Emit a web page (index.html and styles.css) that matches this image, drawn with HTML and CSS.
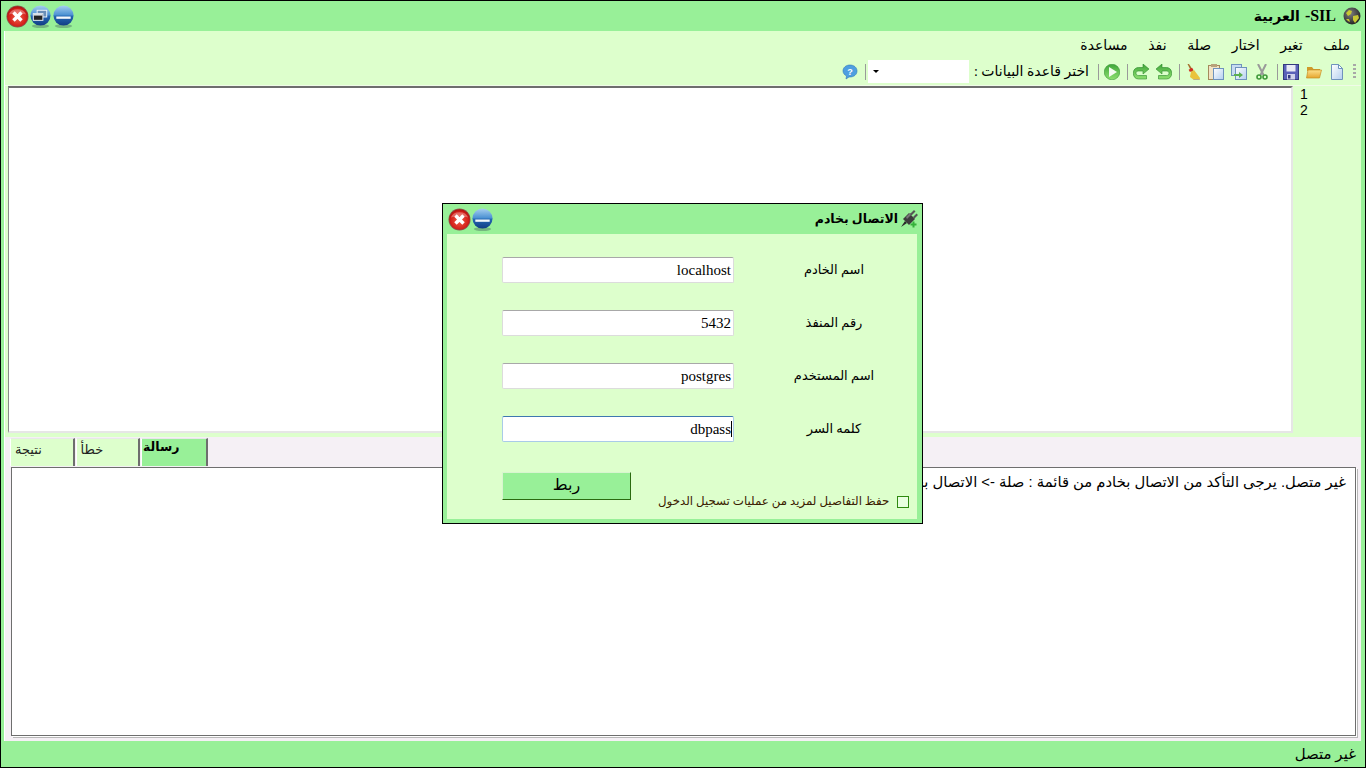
FILE: index.html
```html
<!DOCTYPE html>
<html lang="ar">
<head>
<meta charset="utf-8">
<title>SIL</title>
<link rel="stylesheet" href="styles.css">
</head>
<body>
<svg class="defs" width="0" height="0" aria-hidden="true">
  <defs>
    <radialGradient id="gRed" cx="50%" cy="55%" r="60%"><stop offset="0" stop-color="#f0604a"/><stop offset=".7" stop-color="#d4201a"/><stop offset="1" stop-color="#950b08"/></radialGradient>
    <linearGradient id="gBlue" x1="0" y1="0" x2="0" y2="1"><stop offset="0" stop-color="#a8d0f0"/><stop offset=".48" stop-color="#4a90d2"/><stop offset=".52" stop-color="#2468b4"/><stop offset="1" stop-color="#123c84"/></linearGradient>
    <linearGradient id="gGreen" x1="0" y1="0" x2="0" y2="1"><stop offset="0" stop-color="#3fa63a"/><stop offset="1" stop-color="#8fe070"/></linearGradient>
    <linearGradient id="gDoc" x1="0" y1="0" x2="1" y2="1"><stop offset="0" stop-color="#ffffff"/><stop offset="1" stop-color="#b4cff0"/></linearGradient>
    <linearGradient id="gFolder" x1="0" y1="0" x2="0" y2="1"><stop offset="0" stop-color="#fde08a"/><stop offset="1" stop-color="#e5a52e"/></linearGradient>
    <radialGradient id="gGlobe" cx="40%" cy="35%" r="70%"><stop offset="0" stop-color="#808080"/><stop offset="1" stop-color="#1e1e1e"/></radialGradient>
    <symbol id="i-close" viewBox="0 0 24 24"><circle cx="12" cy="12" r="11.5" fill="#8a5a50"/><circle cx="12" cy="12" r="10.8" fill="url(#gRed)"/><path d="M3 10a9.500 8 0 0 1 18 0a18 10 0 0 0-18 0z" fill="#fff" opacity=".3"/><path d="M7.800 7.800l8.400 8.400M16.200 7.800l-8.400 8.400" stroke="#fff" stroke-width="3.600"/></symbol>
    <symbol id="i-min" viewBox="0 0 24 24"><ellipse cx="12" cy="22" rx="9" ry="2" fill="#5f8f70" opacity=".6"/><circle cx="12" cy="11" r="10.500" fill="url(#gBlue)"/><rect x="4.500" y="12" width="15" height="2.400" fill="#f4f8fc"/></symbol>
    <symbol id="i-restore" viewBox="0 0 24 24"><ellipse cx="12" cy="22" rx="9" ry="2" fill="#5f8f70" opacity=".6"/><circle cx="12" cy="11" r="10.500" fill="url(#gBlue)"/><rect x="8.500" y="5.500" width="10" height="7" fill="#6a8fb8" stroke="#eef4fa"/><rect x="4.500" y="9" width="10" height="7" fill="#222" stroke="#eef4fa"/><rect x="5" y="9.500" width="9" height="1.500" fill="#eef4fa"/></symbol>
    <symbol id="i-globe" viewBox="0 0 18 18"><circle cx="9" cy="9" r="8.500" fill="url(#gGlobe)"/><path d="M3 6l3-3 3 1-1 3-3 2zM10 9l5-1 1 3-4 5-2-3zM3 12l3 0 1 3-2-1z" fill="#c8c832"/></symbol>
    <symbol id="i-plug" viewBox="0 0 18 18"><path d="M1 17l4-6 2 2z" fill="#2a2a2a"/><path d="M3 9l6-6 6 6-6 6z" fill="#3c3c3c"/><path d="M6 7l4-4 2 1-5 5z" fill="#777"/><path d="M10 4l4-4 1.500 1.500-4 4zM13 7l3.500-3.500 1.500 1.500-4 4z" fill="#555"/><path d="M12.500 11.500h2v2h2v2h-2v2h-2v-2h-2v-2h2z" fill="#35b03a"/></symbol>
    <symbol id="i-new" viewBox="0 0 16 16"><path d="M2.500 .5h7l4 4v11h-11z" fill="url(#gDoc)" stroke="#6f93bd"/><path d="M9.500 .5v4h4z" fill="#fff" stroke="#6f93bd"/></symbol>
    <symbol id="i-open" viewBox="0 0 16 16"><path d="M1 3h5l1.500 2H14v2H1z" fill="#d09a2a"/><path d="M.5 14l1.500-8h13.500l-2 8z" fill="url(#gFolder)" stroke="#c78f22" stroke-width=".7"/></symbol>
    <symbol id="i-save" viewBox="0 0 16 16"><rect x=".5" y=".5" width="15" height="15" fill="#5a62b8" stroke="#33397f"/><rect x="3.500" y="1" width="9" height="6.500" fill="#e8eaf6"/><rect x="4" y="10" width="8" height="5.500" fill="#cfd3ea"/><rect x="5" y="11" width="2.500" height="3.500" fill="#33397f"/></symbol>
    <symbol id="i-cut" viewBox="0 0 16 16"><path d="M4 0l5.500 11M12 0L6.500 11" stroke="#9a9a9a" stroke-width="2" fill="none"/><circle cx="5" cy="13" r="2" fill="none" stroke="#3f9a3a" stroke-width="1.600"/><circle cx="11" cy="13" r="2" fill="none" stroke="#3f9a3a" stroke-width="1.600"/></symbol>
    <symbol id="i-copy" viewBox="0 0 16 16"><rect x=".5" y=".5" width="10" height="11" fill="#c8dcf2" stroke="#6f93bd"/><rect x="4.500" y="3.500" width="11" height="12" fill="url(#gDoc)" stroke="#6f93bd"/><path d="M3 10h5V8l4 3-4 3v-2H3z" fill="#5bb04f"/></symbol>
    <symbol id="i-paste" viewBox="0 0 16 16"><rect x=".5" y="1.500" width="11" height="14" fill="#f1e3c5" stroke="#a58a5c"/><rect x="3" y="0" width="6" height="3" fill="#b7a27a"/><rect x="5.500" y="4.500" width="10" height="11" fill="url(#gDoc)" stroke="#6f93bd"/></symbol>
    <symbol id="i-broom" viewBox="0 0 16 16"><path d="M2.500 0l1.500 0 4.500 7-2 1z" fill="#a5702c"/><rect x="4" y="4.500" width="4" height="2.600" fill="#d32a20" transform="rotate(-30 6 5.800)"/><path d="M6 8l3-2 6 8-.5 2H9l-4-3z" fill="#e9c33d"/><path d="M9 15l5 0 1 1H8z" fill="#b9b08a"/></symbol>
    <symbol id="i-undo" viewBox="0 0 16 16"><path d="M6 0L0 5l6 5V7h4.500c1.500 0 2.500.8 2.500 2.200s-1 2.300-2.500 2.300H2.500V15h8c3 0 5.200-2.300 5.200-5.800s-2.200-5.700-5.200-5.700H6z" fill="url(#gGreen)" stroke="#2c8a2c" stroke-width=".6"/></symbol>
    <symbol id="i-redo" viewBox="0 0 16 16"><path d="M10 0l6 5-6 5V7H5.500C4 7 3 7.800 3 9.200s1 2.300 2.500 2.300h8V15h-8C2.500 15 .3 12.700.3 9.200S2.500 3.500 5.500 3.500H10z" fill="url(#gGreen)" stroke="#2c8a2c" stroke-width=".6"/></symbol>
    <symbol id="i-run" viewBox="0 0 16 16"><circle cx="8" cy="8" r="7.800" fill="url(#gGreen)" stroke="#2a8a2a" stroke-width=".5"/><path d="M5 3l8 5-8 5z" fill="#f4fbf0"/></symbol>
    <symbol id="i-help" viewBox="0 0 16 16"><path d="M8 1c4 0 7 2.500 7 6s-3 6-7 6l-1 0-3 2 .5-3C2.500 11 1 9 1 7c0-3.500 3-6 7-6z" fill="#4f9fe0" stroke="#2f78ba" stroke-width=".6"/><text x="8" y="10.500" font-size="9" font-weight="700" text-anchor="middle" fill="#fff" font-family="Liberation Sans, sans-serif">?</text></symbol>
  </defs>
</svg>

<div class="app">
  <header class="titlebar">
    <div class="win-btns">
      <svg class="winbtn"><use href="#i-close"/></svg>
      <svg class="winbtn"><use href="#i-restore"/></svg>
      <svg class="winbtn"><use href="#i-min"/></svg>
    </div>
    <div class="apptitle">
      <span>العربية</span><span class="brand">-SIL</span>
      <svg class="globe"><use href="#i-globe"/></svg>
    </div>
  </header>

  <main class="main">
    <nav class="menu" dir="rtl">
      <span>ملف</span><span>تغير</span><span>اختار</span><span>صلة</span><span>نفذ</span><span>مساعدة</span>
    </nav>

    <div class="toolbar" dir="rtl">
      <span class="grip"></span>
      <svg class="tool"><use href="#i-new"/></svg>
      <svg class="tool"><use href="#i-open"/></svg>
      <svg class="tool"><use href="#i-save"/></svg>
      <span class="sep"></span>
      <svg class="tool"><use href="#i-cut"/></svg>
      <svg class="tool"><use href="#i-copy"/></svg>
      <svg class="tool"><use href="#i-paste"/></svg>
      <svg class="tool"><use href="#i-broom"/></svg>
      <span class="sep"></span>
      <svg class="tool"><use href="#i-undo"/></svg>
      <svg class="tool"><use href="#i-redo"/></svg>
      <span class="sep"></span>
      <svg class="tool"><use href="#i-run"/></svg>
      <span class="sep"></span>
      <span class="dblabel">اختر قاعدة البيانات :</span>
      <span class="select"><span class="arrow"></span></span>
      <span class="sep"></span>
      <svg class="tool"><use href="#i-help"/></svg>
    </div>

    <section class="editor-row">
      <div class="editor"></div>
      <div class="gutter"><div>1</div><div>2</div></div>
    </section>

    <section class="bottom">
      <div class="tabs">
        <div class="tab">نتيجة</div>
        <div class="tab">خطأ</div>
        <div class="tab active">رسالة</div>
      </div>
      <div class="msgbox" dir="rtl">غير متصل. يرجى التأكد من الاتصال بخادم من قائمة : صلة -&gt; الاتصال بخادم</div>
    </section>
  </main>

  <footer class="status" dir="rtl">غير متصل</footer>

  <div class="dialog">
    <div class="dlg-title">
      <div class="win-btns">
        <svg class="dlgbtn"><use href="#i-close"/></svg>
        <svg class="dlgbtn"><use href="#i-min"/></svg>
      </div>
      <div class="dlg-name"><span>الاتصال بخادم</span><svg class="plug"><use href="#i-plug"/></svg></div>
    </div>
    <div class="dlg-body">
      <div class="row"><div class="field">localhost</div><div class="lbl">اسم الخادم</div></div>
      <div class="row"><div class="field">5432</div><div class="lbl">رقم المنفذ</div></div>
      <div class="row"><div class="field">postgres</div><div class="lbl">اسم المستخدم</div></div>
      <div class="row"><div class="field focus"><span class="caret">dbpass</span></div><div class="lbl">كلمه السر</div></div>
      <div class="actions">
        <button class="connect" type="button">ربط</button>
        <div class="remember"><span class="remember-text">حفظ التفاصيل لمزيد من عمليات تسجيل الدخول</span><span class="check"></span></div>
      </div>
    </div>
  </div>
</div>
</body>
</html>
```

FILE: styles.css
```css
* { box-sizing: border-box; }
html, body { margin: 0; padding: 0; }
body {
  width: 1366px;
  height: 768px;
  overflow: hidden;
  font-family: "Liberation Serif", "DejaVu Sans", serif;
  font-size: 14px;
  color: #000;
}
.defs { position: absolute; }

.app {
  position: relative;
  width: 1366px;
  height: 768px;
  display: flex;
  flex-direction: column;
  background: #98f098;
  border: 1px solid #000;
}

.titlebar {
  height: 30px;
  flex: none;
  display: flex;
  justify-content: space-between;
  align-items: center;
  padding: 0 4px 0 5px;
}
.win-btns { display: flex; }
.winbtn { width: 23px; height: 23px; }
.apptitle {
  display: flex;
  align-items: center;
  font-weight: 700;
  font-size: 14px;
}
.brand { font-size: 16px; margin: 0 7px 0 5px; }
.globe { width: 18px; height: 18px; }

.main {
  flex: 1;
  min-height: 0;
  margin: 0 4px 0 3px;
  background: #ddffcc;
  border-left: 1px solid #fff;
  display: flex;
  flex-direction: column;
}

.menu {
  height: 29px;
  flex: none;
  display: flex;
  align-items: center;
  gap: 20.6px;
  padding: 0 11px 0 0;
  font-size: 14px;
}

.toolbar {
  height: 26px;
  flex: none;
  display: flex;
  align-items: center;
  padding: 0 5px 2px 0;
  border-bottom: 1px solid #f0fbe8;
}
.grip {
  width: 3px;
  height: 16px;
  margin-inline-end: 4.5px;
  background: repeating-linear-gradient(to bottom, #a8a8a8 0 2px, transparent 2px 4px);
}
.tool { width: 16px; height: 16px; margin: 0 3.5px; }
.sep {
  width: 1px;
  height: 16px;
  background: #9a9a9a;
  margin-inline-start: 1.5px;
  margin-inline-end: 3.5px;
}
.dblabel { font-size: 14px; margin-inline-start: 5.5px; margin-inline-end: 5px; white-space: nowrap; }
.select {
  width: 101px;
  height: 23px;
  background: #fff;
  display: flex;
  align-items: center;
  justify-content: flex-end;
  padding-left: 5px;
}
.arrow {
  width: 0;
  height: 0;
  border: 3px solid transparent;
  border-top: 3px solid #000;
  border-bottom: 0;
}

.editor-row {
  height: 351px;
  flex: none;
  display: flex;
  padding-left: 3px;
}
.editor {
  width: 1285px;
  height: 347px;
  background: #fff;
  border-top: 2px solid #6e6e6e;
  border-left: 1px solid #8a8a8a;
  border-right: 2px solid #e6e6e6;
  border-bottom: 2px solid #e6e6e6;
}
.gutter {
  padding: 0 0 0 7px;
  font-family: "Liberation Sans", sans-serif;
  font-size: 14px;
  line-height: 16px;
}

.bottom {
  flex: 1;
  min-height: 0;
  background: #f5f0f5;
  padding: 1px 5px 5px 1px;
  display: flex;
  flex-direction: column;
}
.tabs {
  display: flex;
  height: 28px;
  flex: none;
  padding-left: 4px;
  gap: 1px;
}
.tab {
  width: 64.5px;
  height: 28px;
  background: #ddffcc;
  border-top: 1px solid #e8e8e8;
  border-right: 2px solid #6e6e6e;
  border-left: 1px solid #fff;
  font-size: 13px;
  text-align: left;
  padding: 3px 0 0 4px;
  color: #222;
}
.tab.active {
  width: 67px;
  background: #98f098;
  font-weight: 700;
  font-size: 12.5px;
  color: #000;
  padding: 0 0 0 1px;
}
.msgbox {
  flex: 1;
  margin: 1px 0 0 5px;
  background: #fff;
  border: 1px solid #6e6e6e;
  box-shadow: 1px 1px 0 #fff, 2px 2px 0 #b8b8b8;
  padding: 5px 9px;
  font-family: "Liberation Sans", "DejaVu Sans", sans-serif;
  font-size: 14.8px;
  white-space: nowrap;
  overflow: hidden;
}

.status {
  height: 26px;
  flex: none;
  display: flex;
  align-items: center;
  padding: 0 9px;
  font-size: 15px;
}

.dialog {
  position: absolute;
  left: 441px;
  top: 202px;
  width: 481px;
  height: 321px;
  background: #98f098;
  border: 1px solid #000;
  display: flex;
  flex-direction: column;
}
.dlg-title {
  height: 30px;
  flex: none;
  display: flex;
  justify-content: space-between;
  align-items: center;
  padding: 0 4px 0 5px;
}
.dlgbtn { width: 23px; height: 23px; }
.dlg-name {
  display: flex;
  align-items: center;
  gap: 2px;
  font-weight: 700;
  font-size: 12.5px;
}
.plug { width: 18px; height: 18px; }

.dlg-body {
  flex: 1;
  margin: 0 5px 4px 4px;
  background: #ddffcc;
  padding: 23px 0 0 55px;
  display: flex;
  flex-direction: column;
}
.row {
  display: flex;
  align-items: center;
  height: 26px;
  margin-bottom: 27px;
}
.field {
  flex: none;
  width: 232px;
  height: 26px;
  background: #fff;
  border: 1px solid #dcdcdc;
  border-top-color: #a8a8a8;
  border-radius: 2px;
  font-size: 15px;
  line-height: 24px;
  text-align: right;
  padding: 0 2px 0 1px;
}
.field.focus { border-color: #a9cbe8; border-top-color: #3f78b0; padding-right: 1px; }
.caret { border-right: 1px solid #000; }
.lbl {
  flex: none;
  width: 200px;
  font-size: 13px;
  text-align: center;
}
.actions {
  margin-top: 3px;
  display: flex;
  align-items: flex-end;
}
.connect {
  flex: none;
  width: 129px;
  height: 28px;
  background: #98f098;
  border: 0;
  border-top: 1px solid #d8f5d0;
  border-left: 1px solid #d8f5d0;
  border-right: 1px solid #2a6a10;
  border-bottom: 1px solid #2a6a10;
  font-family: inherit;
  font-size: 16px;
  padding: 0 0 4px;
}
.remember {
  display: flex;
  align-items: center;
  gap: 8px;
  margin: 0 0 -9px 27px;
  font-size: 11.8px;
  color: #3a2000;
}
.check {
  flex: none;
  width: 12px;
  height: 12px;
  background: #e8ffe0;
  border: 1px solid #2f8a10;
}
```
